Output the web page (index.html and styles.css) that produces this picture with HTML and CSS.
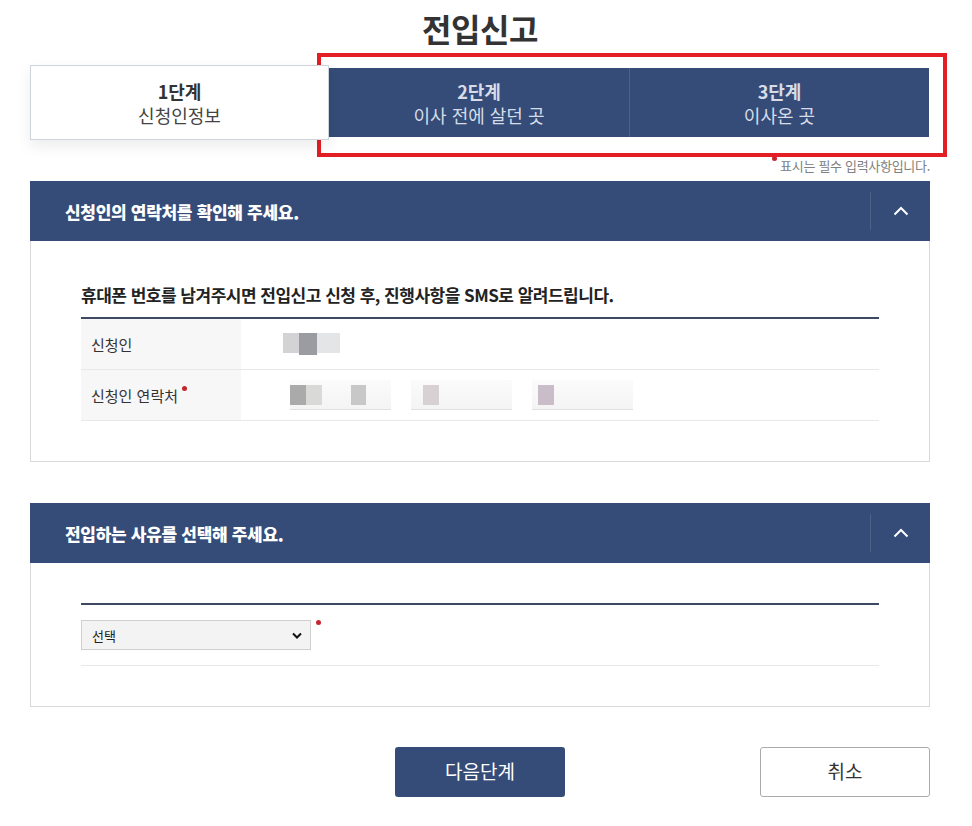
FILE: index.html
```html
<!DOCTYPE html>
<html lang="ko">
<head>
<meta charset="utf-8">
<title>전입신고</title>
<link rel="stylesheet" href="styles.css">
</head>
<body>
<div class="page">
  <h1 class="title">전입신고</h1>

  <div class="steps">
    <div class="step step-active">
      <strong>1단계</strong>
      <span>신청인정보</span>
    </div>
    <div class="step-group">
      <div class="step">
        <strong>2단계</strong>
        <span>이사 전에 살던 곳</span>
      </div>
      <div class="step">
        <strong>3단계</strong>
        <span>이사온 곳</span>
      </div>
    </div>
    <div class="highlight"></div>
  </div>

  <p class="req-note"><i class="req-dot"></i>표시는 필수 입력사항입니다.</p>

  <section class="panel">
    <div class="panel-head">
      <h2>신청인의 연락처를 확인해 주세요.</h2>
      <button class="toggle" type="button" aria-label="접기">
        <svg width="16" height="10" viewBox="0 0 16 10"><polyline points="1.5,8.5 8,2 14.5,8.5" fill="none" stroke="#fff" stroke-width="2"/></svg>
      </button>
    </div>
    <div class="panel-body">
      <p class="lead">휴대폰 번호를 남겨주시면 전입신고 신청 후, 진행사항을 SMS로 알려드립니다.</p>
      <div class="form-table">
        <div class="row">
          <div class="label">신청인</div>
          <div class="value">
            <div class="blur blur-name">
              <i class="b1"></i><i class="b2"></i><i class="b3"></i>
            </div>
          </div>
        </div>
        <div class="row">
          <div class="label">신청인 연락처<i class="req-dot"></i></div>
          <div class="value phones">
            <div class="phone"><i class="p1"></i><i class="p2"></i><i class="p3"></i></div>
            <div class="phone"><i class="p4"></i></div>
            <div class="phone"><i class="p5"></i></div>
          </div>
        </div>
      </div>
    </div>
  </section>

  <section class="panel">
    <div class="panel-head">
      <h2>전입하는 사유를 선택해 주세요.</h2>
      <button class="toggle" type="button" aria-label="접기">
        <svg width="16" height="10" viewBox="0 0 16 10"><polyline points="1.5,8.5 8,2 14.5,8.5" fill="none" stroke="#fff" stroke-width="2"/></svg>
      </button>
    </div>
    <div class="panel-body">
      <div class="form-table">
        <div class="row row-select">
          <div class="select-wrap">
            <select class="select">
              <option>선택</option>
            </select>
            <svg class="select-arrow" width="10" height="7" viewBox="0 0 10 7"><polyline points="1,1.5 5,5.5 9,1.5" fill="none" stroke="#111" stroke-width="2"/></svg>
          </div>
          <i class="req-dot req-dot-select"></i>
        </div>
      </div>
    </div>
  </section>

  <div class="actions">
    <span></span>
    <button class="btn btn-primary" type="button">다음단계</button>
    <button class="btn btn-line" type="button">취소</button>
  </div>
</div>
</body>
</html>
```

FILE: styles.css
```css
* { box-sizing: border-box; }

body {
  margin: 0;
  background: #fff;
  font-family: "Noto Sans CJK KR", "Noto Sans", sans-serif;
  color: #333;
}

.page {
  width: 900px;
  margin-left: 30px;
  padding-bottom: 30px;
}

.title {
  margin: 8px 0 17px;
  height: 40px;
  line-height: 40px;
  font-size: 32px;
  font-weight: 700;
  text-align: center;
  color: #333;
  letter-spacing: -0.5px;
}

/* steps */
.steps {
  position: relative;
  display: flex;
  align-items: center;
  height: 75px;
}

.step {
  display: flex;
  flex-direction: column;
  align-items: center;
  justify-content: center;
  width: 300px;
  height: 69px;
  color: #d6dce8;
}

.step strong {
  font-size: 18px;
  line-height: 24px;
  font-weight: 700;
}

.step span {
  font-size: 18px;
  line-height: 24px;
  font-weight: 400;
}

.step-active {
  width: 299px;
  height: 75px;
  background: #fff;
  border: 1px solid #cfd3dc;
  color: #333;
  box-shadow: 0 6px 14px rgba(0, 0, 0, 0.08);
  position: relative;
  z-index: 1;
}

.step-active strong { color: #333; }
.step-active span { color: #444; }

.step-group {
  display: flex;
  background: #344c77;
}

.step-group .step + .step {
  border-left: 1px solid rgba(255, 255, 255, 0.12);
}

.highlight {
  position: absolute;
  left: 287px;
  top: -12px;
  width: 630px;
  height: 104px;
  border: 4px solid #e31e25;
  pointer-events: none;
}

/* required */
.req-note {
  margin: 16px 0 5px;
  height: 20px;
  line-height: 20px;
  font-size: 13px;
  color: #808080;
  text-align: right;
  letter-spacing: -0.3px;
}

.req-dot {
  display: inline-block;
  width: 5px;
  height: 5px;
  border-radius: 50%;
  background: #c5262d;
  vertical-align: top;
  margin: 0 3px 0 0;
}

/* panel */
.panel {
  margin-bottom: 41px;
}

.panel-head {
  display: flex;
  align-items: center;
  height: 60px;
  background: #344c77;
  padding-left: 35px;
}

.panel-head h2 {
  flex: 1;
  margin: 0;
  font-size: 17px;
  font-weight: 800;
  color: #fff;
  letter-spacing: -0.3px;
}

.toggle {
  width: 60px;
  height: 38px;
  border: 0;
  border-left: 1px solid rgba(255, 255, 255, 0.12);
  background: transparent;
  padding: 0;
  display: flex;
  align-items: center;
  justify-content: center;
}

.panel-body {
  border: 1px solid #d9d9d9;
  border-top: 0;
  padding: 40px 50px 40px;
}

.lead {
  margin: 3px 0 0;
  height: 33px;
  font-size: 17px;
  font-weight: 700;
  color: #222;
  letter-spacing: -0.5px;
  line-height: 22px;
}

.form-table {
  border-top: 2px solid #3d4a62;
}

.row {
  display: flex;
  height: 51px;
  border-bottom: 1px solid #e8e8e8;
}

.label {
  width: 160px;
  background: #f7f7f7;
  padding-left: 10px;
  display: flex;
  align-items: center;
  font-size: 15px;
  color: #333;
}

.label .req-dot {
  align-self: flex-start;
  margin: 16px 0 0 4px;
}

.value {
  flex: 1;
  display: flex;
  align-items: center;
}

.blur-name {
  display: flex;
  margin-left: 42px;
}

.blur i, .phone i {
  display: block;
  height: 20px;
}

.blur-name .b1 { width: 16px; background: #d3d3d5; }
.blur-name .b2 { width: 18px; background: #9a9ca2; height: 22px; }
.blur-name .b3 { width: 23px; background: #e4e5e6; }

.phones {
  gap: 20px;
  padding-left: 49px;
}

.phone {
  width: 101px;
  height: 30px;
  border-bottom: 1px solid #e0e0e0;
  background: linear-gradient(#fbfbfb, #f4f4f4);
  display: flex;
  align-items: center;
}

.phone .p1 { width: 16px; background: #aaa; }
.phone .p2 { width: 16px; background: #d9dad8; }
.phone .p3 { width: 15px; background: #c8c8c8; margin-left: 29px; }
.phone .p4 { width: 16px; background: #d8d1d4; margin-left: 12px; }
.phone .p5 { width: 16px; background: #c9bdc9; margin-left: 6px; }

.row-select {
  height: 61px;
  align-items: center;
}

.select-wrap {
  position: relative;
  width: 230px;
  height: 30px;
}

.select {
  appearance: none;
  -webkit-appearance: none;
  width: 100%;
  height: 100%;
  border: 1px solid #cfcfcf;
  border-radius: 0;
  background: #f3f3f3;
  padding: 0 10px;
  font-family: "Noto Sans CJK KR", sans-serif;
  font-size: 13px;
  color: #222;
}

.select-arrow {
  position: absolute;
  right: 9px;
  top: 12px;
  pointer-events: none;
}

.req-dot-select {
  align-self: flex-start;
  margin: 15px 0 0 5px;
}

/* actions */
.actions {
  display: grid;
  grid-template-columns: 1fr 170px 1fr;
  align-items: center;
  margin-top: -1px;
}

.btn {
  width: 170px;
  height: 50px;
  border-radius: 3px;
  font-family: "Noto Sans CJK KR", sans-serif;
  font-size: 19px;
  line-height: 1;
  padding: 0 0 3px;
  cursor: pointer;
}

.btn-primary {
  background: #344c77;
  border: 0;
  color: #fff;
}

.btn-line {
  justify-self: end;
  background: #fff;
  border: 1px solid #aaa;
  color: #333;
}
```
